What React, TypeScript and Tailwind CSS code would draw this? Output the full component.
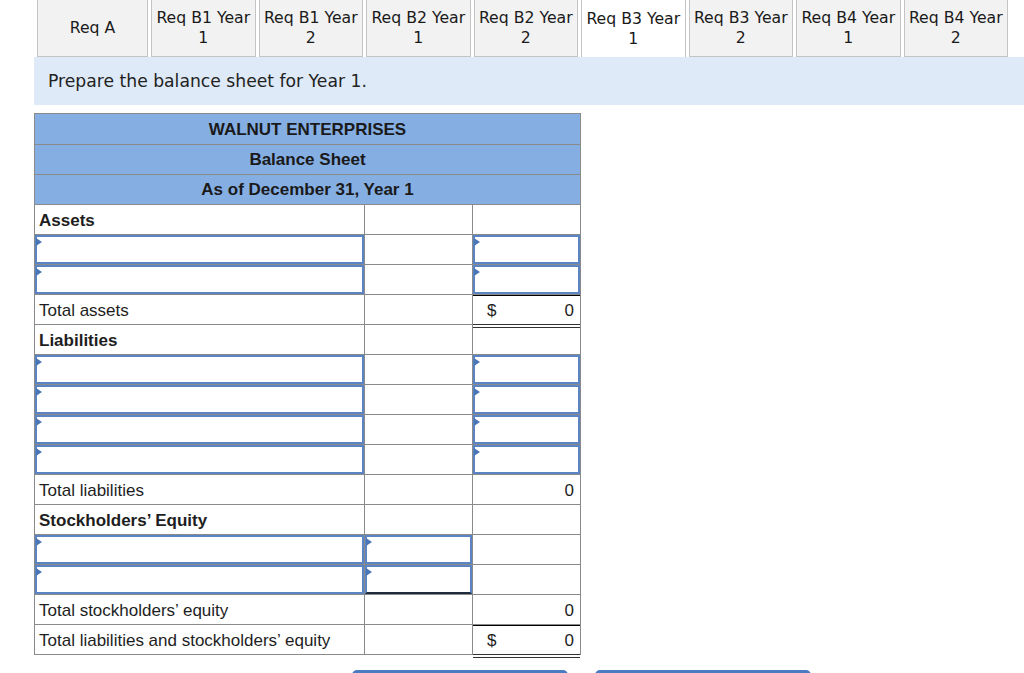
import React from 'react'

const tabs = [
  { label: 'Req A', wide: true },
  { label: 'Req B1 Year', sub: '1' },
  { label: 'Req B1 Year', sub: '2' },
  { label: 'Req B2 Year', sub: '1' },
  { label: 'Req B2 Year', sub: '2' },
  { label: 'Req B3 Year', sub: '1', active: true },
  { label: 'Req B3 Year', sub: '2' },
  { label: 'Req B4 Year', sub: '1' },
  { label: 'Req B4 Year', sub: '2' },
]

type Kind = 'label' | 'bold' | 'input' | 'total'

type Row = {
  kind: Kind
  text?: string
  in1?: boolean
  in2?: boolean
  in3?: boolean
  dollar?: boolean
  value?: string
  topLine?: boolean
  doubleLine?: boolean
  in2Bottom?: boolean
}

const rows: Row[] = [
  { kind: 'bold', text: 'Assets' },
  { kind: 'input', in1: true, in3: true },
  { kind: 'input', in1: true, in3: true },
  { kind: 'total', text: 'Total assets', dollar: true, value: '0', topLine: true, doubleLine: true },
  { kind: 'bold', text: 'Liabilities' },
  { kind: 'input', in1: true, in3: true },
  { kind: 'input', in1: true, in3: true },
  { kind: 'input', in1: true, in3: true },
  { kind: 'input', in1: true, in3: true },
  { kind: 'total', text: 'Total liabilities', value: '0' },
  { kind: 'bold', text: 'Stockholders’ Equity' },
  { kind: 'input', in1: true, in2: true },
  { kind: 'input', in1: true, in2: true, in2Bottom: true },
  { kind: 'total', text: 'Total stockholders’ equity', value: '0' },
  { kind: 'total', text: 'Total liabilities and stockholders’ equity', dollar: true, value: '0', topLine: true, doubleLine: true },
]

function InputBox({ dark }: { dark?: boolean }) {
  return (
    <div
      className={`relative h-full w-full border-2 border-[#5b84c4] bg-white ${dark ? 'border-b-[#1f2a3a]' : ''}`}
    >
      <span className="absolute left-[-1px] top-[1px] h-0 w-0 border-y-[4px] border-l-[6px] border-y-transparent border-l-[#4a76b8]" />
    </div>
  )
}

export default function App() {
  return (
    <div className="h-[673px] w-[1024px] overflow-hidden bg-white pl-[34px]">
      {/* tabs */}
      <div
        className="ml-[3px] flex h-[57px] gap-[3px] text-[15.7px] leading-[20px] text-[#1a1a1a]"
        style={{ fontFamily: '"DejaVu Sans", Verdana, sans-serif' }}
      >
        {tabs.map((t, i) => (
          <div
            key={i}
            className={`flex flex-col items-center justify-center border-x border-[#c4c4c4] ${
              t.wide ? 'w-[111px]' : 'w-[104.5px]'
            } ${t.active ? 'bg-white' : 'border-b border-b-[#c4c4c4] bg-[#f2f2f2]'}`}
          >
            <span>{t.label}</span>
            {t.sub && <span>{t.sub}</span>}
          </div>
        ))}
      </div>

      {/* banner */}
      <div
        className="flex h-[48px] items-center bg-[#deeaf7] pl-[14px] pt-[2px] text-[17.2px] text-[#222]"
        style={{ fontFamily: '"DejaVu Sans", Verdana, sans-serif' }}
      >
        Prepare the balance sheet for Year 1.
      </div>

      {/* balance sheet */}
      <div
        className="mt-[8px] w-[547px] border border-[#8a8a8a] text-[17px] text-[#1e1e1e]"
        style={{ fontFamily: '"Liberation Sans", Arial, sans-serif' }}
      >
        {['WALNUT ENTERPRISES', 'Balance Sheet', 'As of December 31, Year 1'].map((h, i) => (
          <div
            key={h}
            className={`flex items-center justify-center bg-[#85aee2] pt-[1px] text-[17px] font-bold text-[#1a1a1a] ${
              i > 0 ? 'h-[30px] border-t border-[#8a8a8a]' : 'h-[30px]'
            }`}
          >
            {h}
          </div>
        ))}
        {rows.map((r, i) => (
          <div key={i} className="flex h-[30px] border-t border-[#8a8a8a]">
            <div className="flex w-[329px] items-center">
              {r.in1 ? (
                <InputBox />
              ) : (
                <span className={`pl-[4px] pt-[2px] ${r.kind === 'bold' ? 'font-bold' : ''}`}>{r.text}</span>
              )}
            </div>
            <div className="w-[108px] border-l border-[#8a8a8a]">
              {r.in2 && <InputBox dark={r.in2Bottom} />}
            </div>
            <div className="relative w-[108px] border-l border-[#8a8a8a]">
              {r.in3 ? (
                <InputBox />
              ) : r.value ? (
                <div
                  className={`flex h-full items-center justify-between pl-[14px] pr-[6px] pt-[2px] ${
                    r.topLine ? 'border-t border-black' : ''
                  }`}
                >
                  <span>{r.dollar ? '$' : ''}</span>
                  <span>{r.value}</span>
                </div>
              ) : null}
              {r.doubleLine && (
                <div className="absolute bottom-[-4px] left-0 right-0 h-[4px] border-y border-[#333] bg-white" />
              )}
            </div>
          </div>
        ))}
      </div>

      {/* buttons */}
      <div className="ml-[318px] mt-[15px] flex gap-[27px]">
        <div className="h-[20px] w-[216px] rounded-t-[5px] bg-[#4b7bc0]" />
        <div className="h-[20px] w-[216px] rounded-t-[5px] bg-[#4b7bc0]" />
      </div>
    </div>
  )
}
